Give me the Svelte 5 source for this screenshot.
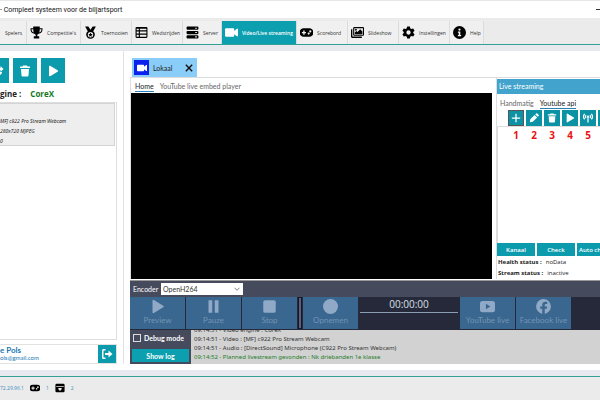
<script lang="ts">
  type Tab = { label: string; icon: string; size: string };

  const tabs: Tab[] = [
    { label: 'Spelers', icon: '', size: 'tiny' },
    { label: "Competitie's", icon: 'trophy', size: 'large' },
    { label: 'Toernooien', icon: 'medal', size: 'medium' },
    { label: 'Wedstrijden', icon: 'table', size: 'medium' },
    { label: 'Server', icon: 'server', size: 'small' },
    { label: 'Video/Live streaming', icon: 'video', size: 'wide' },
    { label: 'Scorebord', icon: 'gamepad', size: 'medium' },
    { label: 'Slideshow', icon: 'images', size: 'medium' },
    { label: 'Instellingen', icon: 'gear', size: 'medium' },
    { label: 'Help', icon: 'info', size: 'short' },
  ];

  const apiActions = [
    { icon: 'plus', label: 'Toevoegen' },
    { icon: 'pencil', label: 'Bewerken' },
    { icon: 'trash', label: 'Verwijderen' },
    { icon: 'play', label: 'Start' },
    { icon: 'antenna', label: 'Uitzenden' },
    { icon: '', label: 'Meer' },
  ];

  const logLines = [
    { text: '09:14:51 - Video engine : CoreX', ok: false },
    { text: '09:14:51 - Video : [MF] c922 Pro Stream Webcam', ok: false },
    { text: '09:14:51 - Audio : [DirectSound] Microphone (C922 Pro Stream Webcam)', ok: false },
    { text: '09:14:52 - Planned livestream gevonden : Nk driebanden 1e klasse', ok: true },
  ];

  let activeTab = $state('Video/Live streaming');
  let encoder = $state('OpenH264');
  let debug = $state(false);
</script>

{#snippet icon(name: string)}
  <svg class="icon" viewBox="0 0 24 24" fill="currentColor" aria-hidden="true">
    {#if name === 'trophy'}
      <path d="M6 1h12v3h5v3c0 4-3 7-7 7.500-.7.900-1.500 1.500-2.500 1.800V19H17v4H7v-4h3.500v-2.700c-1-.3-1.800-.9-2.500-1.800C4 14 1 11 1 7V4h5zM3 6v1c0 2.400 1.400 4.200 3.700 5C6.200 10 6 8 6 6zm18 0h-3c0 2-.2 4-.7 6C19.600 11.200 21 9.400 21 7z" />
    {:else if name === 'medal'}
      <path d="M2 1h6l4 6 4-6h6l-5 8.500a8 8 0 1 1-10 0zm10 10a5 5 0 1 0 0 10 5 5 0 0 0 0-10z" fill-rule="evenodd" />
      <path d="M12 12l1.300 2.700 2.700.4-2 2 .5 2.900-2.500-1.400L9.500 20l.5-2.900-2-2 2.700-.4z" />
    {:else if name === 'table'}
      <path d="M3 2h18a2 2 0 0 1 2 2v16a2 2 0 0 1-2 2H3a2 2 0 0 1-2-2V4a2 2 0 0 1 2-2zm0 3v3h4V5zm6 0v3h12V5zM3 10v4h4v-4zm6 0v4h12v-4zM3 16v4h4v-4zm6 0v4h12v-4z" fill-rule="evenodd" />
    {:else if name === 'server'}
      <path d="M3 1h18a2 2 0 0 1 2 2v2a2 2 0 0 1-2 2H3a2 2 0 0 1-2-2V3a2 2 0 0 1 2-2zm14 2v2h3V3zM3 9h18a2 2 0 0 1 2 2v2a2 2 0 0 1-2 2H3a2 2 0 0 1-2-2v-2a2 2 0 0 1 2-2zm14 2v2h3v-2zM3 17h18a2 2 0 0 1 2 2v2a2 2 0 0 1-2 2H3a2 2 0 0 1-2-2v-2a2 2 0 0 1 2-2zm14 2v2h3v-2z" fill-rule="evenodd" />
    {:else if name === 'video'}
      <path d="M2 4h13a2 2 0 0 1 2 2v3l5-4h2v14h-2l-5-4v3a2 2 0 0 1-2 2H2a2 2 0 0 1-2-2V6a2 2 0 0 1 2-2z" />
    {:else if name === 'gamepad'}
      <path d="M7 4h10a8 8 0 0 1 0 16H7A8 8 0 0 1 7 4zM6 8.500V11H3.500v2.500H6V16h2.500v-2.500H11V11H8.500V8.500zM16 12a2 2 0 1 0 0 4 2 2 0 0 0 0-4zm3-4a2 2 0 1 0 0 4 2 2 0 0 0 0-4z" fill-rule="evenodd" />
    {:else if name === 'images'}
      <path d="M6 2h16a2 2 0 0 1 2 2v12a2 2 0 0 1-2 2H6a2 2 0 0 1-2-2V4a2 2 0 0 1 2-2zm0 2v12h16V4z" fill-rule="evenodd" />
      <path d="M0 6h2.500v13.500H20V22H2a2 2 0 0 1-2-2zM7 15v-3l3-3 2 2 5-5 4 4v5z" />
      <circle cx="9" cy="7" r="1.700" />
    {:else if name === 'gear'}
      <path d="M9.500 1h5l.7 3.300 2.300 1.300 3.200-1.100 2.500 4.300-2.500 2.200v2l2.500 2.200-2.500 4.300-3.200-1.100-2.300 1.300-.7 3.300h-5l-.7-3.300-2.300-1.300-3.200 1.100L.8 15.200 3.300 13v-2L.8 8.800l2.500-4.300 3.200 1.100 2.300-1.300zM12 8a4 4 0 1 0 0 8 4 4 0 0 0 0-8z" fill-rule="evenodd" />
    {:else if name === 'info'}
      <path d="M12 0a12 12 0 1 1 0 24 12 12 0 0 1 0-24zm0 4.500a2 2 0 1 0 0 4.200 2 2 0 0 0 0-4.200zM9 10v2.500h1.500v4H9V19h6v-2.500h-1.500V10z" fill-rule="evenodd" />
    {:else if name === 'trash'}
      <path d="M8 1h8l1 2h5v3H2V3h5zM4 8h16l-1 13a2 2 0 0 1-2 2H7a2 2 0 0 1-2-2z" />
    {:else if name === 'play'}
      <path d="M4 3a1.500 1.500 0 0 1 2.200-1.300l15 9a1.500 1.500 0 0 1 0 2.600l-15 9A1.500 1.500 0 0 1 4 21z" />
    {:else if name === 'pause'}
      <path d="M4 2h6v20H4zM14 2h6v20h-6z" />
    {:else if name === 'stop'}
      <rect x="2" y="2" width="20" height="20" rx="3" />
    {:else if name === 'record'}
      <circle cx="12" cy="12" r="12" />
    {:else if name === 'plus'}
      <path d="M10.500 2h3v8.500H22v3h-8.500V22h-3v-8.500H2v-3h8.500z" />
    {:else if name === 'pencil'}
      <path d="M2 22l1-7L13.500 4.500l6 6L9 21zM15 3l2-2a2 2 0 0 1 2.800 0L23 4.200A2 2 0 0 1 23 7l-2 2z" />
    {:else if name === 'antenna'}
      <g fill="none" stroke="currentColor" stroke-width="3">
        <path d="M4 2C.5 6 .5 11 4 15M20 2c3.500 4 3.500 9 0 13M7.500 5c-2 2-2 5 0 7M16.500 5c2 2 2 5 0 7M12 9v14" />
      </g>
      <circle cx="12" cy="8.500" r="2.500" />
    {:else if name === 'youtube'}
      <path d="M4 3h16a4 4 0 0 1 4 4v10a4 4 0 0 1-4 4H4a4 4 0 0 1-4-4V7a4 4 0 0 1 4-4zm5.500 4.500v9l7-4.500z" fill-rule="evenodd" />
    {:else if name === 'facebook'}
      <path d="M12 0a12 12 0 0 1 2 23.800v-8.300h3.200l.6-3.500H14V9.800c0-1.200.6-2 2-2h2v-3c-1-.2-2-.3-3-.3-3 0-5 1.900-5 5V12H6.700v3.500H10v8.300A12 12 0 0 1 12 0z" />
    {:else if name === 'close'}
      <path d="M4 1l8 8 8-8 3 3-8 8 8 8-3 3-8-8-8 8-3-3 8-8-8-8z" />
    {:else if name === 'logout'}
      <path d="M9 2v3H5v14h4v3H5a3 3 0 0 1-3-3V5a3 3 0 0 1 3-3zM15 5l8 7-8 7v-5H8v-4h7z" />
    {:else if name === 'box'}
      <path d="M4 2h16a3 3 0 0 1 3 3v14a3 3 0 0 1-3 3H4a3 3 0 0 1-3-3V5a3 3 0 0 1 3-3zM3 7v2h18V7zm5 5v3l4 4 4-4v-3z" fill-rule="evenodd" />
    {:else if name === 'link'}
      <path d="M4 12a6 6 0 0 1 6-6h7V2l6 6-6 6v-4h-7a2 2 0 0 0-2 2zm16 2a6 6 0 0 1-6 6H2v-4h12a2 2 0 0 0 2-2z" />
    {:else if name === 'chevron'}
      <path d="M2 7l10 10L22 7" fill="none" stroke="currentColor" stroke-width="2.500" />
    {/if}
  </svg>
{/snippet}

<div class="app">
  <header class="titlebar">
    <span>- Compleet systeem voor de biljartsport</span>
    <button class="minimize" aria-label="Minimaliseren"></button>
  </header>

  <nav class="tabs">
    {#each tabs as tab}
      <button class="tab {tab.size}" class:active={activeTab === tab.label} onclick={() => (activeTab = tab.label)}>
        {#if tab.icon}{@render icon(tab.icon)}{/if}
        <span>{tab.label}</span>
      </button>
    {/each}
  </nav>

  <main class="content">
    <aside class="sources">
      <div class="source-actions">
        <button class="square cut" aria-label="Koppelen">{@render icon('link')}</button>
        <button class="square" aria-label="Verwijderen">{@render icon('trash')}</button>
        <button class="square" aria-label="Start">{@render icon('play')}</button>
      </div>
      <div class="engine"><span>gine :</span><span class="engine-name">CoreX</span></div>
      <div class="source-list">
        <div class="source">
          <span>MF] c922 Pro Stream Webcam</span>
          <span>280x720 MJPEG</span>
          <span>0</span>
        </div>
      </div>
      <div class="account">
        <div class="account-text">
          <strong>e Pols</strong>
          <a href="#mail">ols@gmail.com</a>
        </div>
        <button class="logout" aria-label="Uitloggen">{@render icon('logout')}</button>
      </div>
    </aside>

    <section class="workspace">
      <div class="file-tabs">
        <div class="file-tab">
          <span class="file-icon">{@render icon('video')}</span>
          <span class="file-name">Lokaal</span>
          <button class="close" aria-label="Sluiten">{@render icon('close')}</button>
        </div>
      </div>

      <div class="stage">
        <div class="player">
          <div class="sub-tabs player-tabs">
            <button class="sub-tab selected">Home</button>
            <button class="sub-tab">YouTube live embed player</button>
          </div>
          <div class="video"></div>
        </div>

        <aside class="live">
          <h2>Live streaming</h2>
          <div class="sub-tabs live-tabs">
            <button class="sub-tab">Handmatig</button>
            <button class="sub-tab selected">Youtube api</button>
          </div>
          <div class="api-actions">
            {#each apiActions as action, i}
              <div class="api-action">
                <button class:focused={i === 0} aria-label={action.label}>{@render icon(action.icon)}</button>
                {#if action.icon}<span>{i + 1}</span>{/if}
              </div>
            {/each}
          </div>
          <div class="streams"></div>
          <div class="stream-buttons">
            <button>Kanaal</button>
            <button>Check</button>
            <button class="last">Auto ch</button>
          </div>
          <dl>
            <div><dt>Health status :</dt><dd>noData</dd></div>
            <div><dt>Stream status :</dt><dd>inactive</dd></div>
          </dl>
        </aside>
      </div>

      <div class="encoder">
        <label for="encoder">Encoder</label>
        <div class="select">
          <select id="encoder" bind:value={encoder}>
            <option>OpenH264</option>
          </select>
          {@render icon('chevron')}
        </div>
      </div>

      <div class="controls">
        <button class="control" disabled>{@render icon('play')}<span>Preview</span></button>
        <button class="control" disabled>{@render icon('pause')}<span>Pauze</span></button>
        <button class="control" disabled>{@render icon('stop')}<span>Stop</span></button>
        <div class="divider"></div>
        <button class="control" disabled>{@render icon('record')}<span>Opnemen</span></button>
        <div class="timer"><time>00:00:00</time></div>
        <button class="control" disabled>{@render icon('youtube')}<span>YouTube live</span></button>
        <button class="control" disabled>{@render icon('facebook')}<span>Facebook live</span></button>
      </div>

      <div class="bottom">
        <div class="debug">
          <label><input type="checkbox" bind:checked={debug} />Debug mode</label>
          <button>Show log</button>
        </div>
        <div class="log">
          {#each logLines as line}
            <div class:ok={line.ok}>{line.text}</div>
          {/each}
        </div>
      </div>
    </section>
  </main>

  <footer class="statusbar">
    <span>72.29.96.1</span>
    {@render icon('gamepad')}
    <span>1</span>
    {@render icon('box')}
    <span>2</span>
  </footer>
</div>

<style>
  :global(body) {
    margin: 0;
    overflow: hidden;
  }

  .app {
    display: flex;
    flex-direction: column;
    min-height: 100vh;
    overflow: hidden;
    background: white;
    color: #222;
    font-family: Lato, 'Open Sans', sans-serif;
    font-size: 7px;
    line-height: 10px;
    white-space: nowrap;
  }

  .app * {
    box-sizing: border-box;
  }

  button,
  select,
  input {
    margin: 0;
    padding: 0;
    border: 0;
    border-radius: 0;
    background: none;
    color: inherit;
    font: inherit;
  }

  .icon {
    display: block;
    flex: none;
    width: 12px;
    height: 12px;
  }

  .titlebar {
    display: flex;
    align-items: center;
    justify-content: space-between;
    height: 18px;
    border-top: 1px solid #e6e6e6;
    font-family: Roboto, sans-serif;
    color: #111;
  }

  .minimize {
    width: 4px;
    height: 1px;
    background: #333;
  }

  .tabs {
    display: flex;
    height: 27px;
    padding-top: 3px;
    background: #ebebeb;
    border-bottom: 1px solid #35a096;
  }

  .tab {
    display: flex;
    align-items: center;
    gap: 4px;
    padding-left: 3px;
    border-right: 1px solid #dcdcdc;
    background: #f0f0f0;
    font-family: 'Open Sans', sans-serif;
    font-size: 5px;
    color: #333;
  }

  .tab .icon {
    width: 13px;
    height: 13px;
    color: black;
  }

  .tab.tiny { width: 27px; padding-left: 5px; }
  .tab.short { width: 34px; }
  .tab.small { width: 39px; }
  .tab.medium { width: 51px; }
  .tab.large { width: 54px; }
  .tab.wide { width: 75px; }

  .tab.active {
    background: #0b9fb0;
    color: white;
    font-weight: 600;
  }

  .tab.active .icon {
    color: white;
  }

  .content {
    display: flex;
    flex: 1;
    padding-bottom: 6px;
    border-top: 6px solid #e7e9ee;
  }

  .sources {
    display: flex;
    flex-direction: column;
    flex: none;
    width: 124px;
    padding: 7px 6px 0 0;
    border-right: 1px solid #e2e2e2;
  }

  .source-actions {
    display: flex;
    gap: 4px;
  }

  .square {
    display: flex;
    align-items: center;
    justify-content: center;
    width: 24px;
    height: 25px;
    background: #0b9bad;
    color: white;
  }

  .square.cut {
    justify-content: flex-end;
    width: 9px;
    padding-right: 5px;
    overflow: hidden;
  }

  .engine {
    display: flex;
    gap: 9px;
    padding: 6px 0 3px;
    font-family: 'Open Sans', sans-serif;
    font-size: 8px;
    font-weight: 700;
  }

  .engine-name {
    color: #11761b;
  }

  .source-list {
    flex: 1;
    border: 1px solid #dedede;
    border-left: 0;
    margin-bottom: 4px;
  }

  .source {
    display: flex;
    flex-direction: column;
    height: 43px;
    margin-right: 1px;
    padding-top: 12px;
    border: 1px solid #d4d4d4;
    border-left: 0;
    background: #eee;
    font-family: 'Noto Sans', sans-serif;
    font-size: 5px;
    font-style: italic;
  }

  .account {
    display: flex;
    align-items: center;
    justify-content: space-between;
    height: 20px;
    border: 1px solid #e2e2e2;
    border-left: 0;
  }

  .account-text {
    display: flex;
    flex-direction: column;
    font-size: 6px;
    line-height: 8px;
    color: #1a78b4;
  }

  .account-text strong {
    font-size: 8px;
  }

  a {
    color: inherit;
    text-decoration: none;
  }

  .logout {
    display: flex;
    align-items: center;
    justify-content: center;
    width: 18px;
    height: 18px;
    background: #0b9bad;
    color: white;
  }

  .workspace {
    display: flex;
    flex-direction: column;
    flex: 1;
    min-width: 0;
    padding: 7px 0 0 6px;
  }

  .file-tabs {
    display: flex;
    height: 20px;
    padding-left: 2px;
    border-bottom: 1px solid #ddd;
  }

  .file-tab {
    display: flex;
    align-items: center;
    width: 65px;
    padding: 0 4px 0 2px;
    background: #8bcdf9;
    font-size: 7px;
  }

  .file-icon {
    display: flex;
    align-items: center;
    justify-content: center;
    width: 15px;
    height: 15px;
    background: #0b22ee;
    color: white;
  }

  .file-icon .icon {
    width: 10px;
    height: 10px;
  }

  .file-name {
    flex: 1;
    padding-left: 4px;
  }

  .close .icon {
    width: 8px;
    height: 8px;
    color: #111;
  }

  .stage {
    display: flex;
    flex: 1;
    gap: 4px;
    padding-bottom: 1px;
  }

  .player {
    display: flex;
    flex-direction: column;
    flex: 1;
    min-width: 0;
    border-left: 1px solid #ddd;
  }

  .sub-tabs {
    display: flex;
    gap: 6px;
    color: #666;
    font-size: 7px;
  }

  .sub-tab {
    border-bottom: 1px solid transparent;
  }

  .sub-tab.selected {
    border-color: #2980b9;
    color: #222;
  }

  .player-tabs {
    height: 15px;
    padding: 3px 4px 1px;
  }

  .video {
    flex: 1;
    background: black;
  }

  .live {
    display: flex;
    flex-direction: column;
    flex: none;
    width: 104px;
    padding-top: 1px;
    border-left: 1px solid #ddd;
    overflow: hidden;
  }

  h2 {
    margin: 0;
    padding: 2px;
    height: 15px;
    background: #42a4cc;
    color: white;
    font-size: 7px;
    font-weight: 400;
    line-height: 11px;
  }

  .live-tabs {
    height: 16px;
    padding: 3px 3px 1px;
  }

  .api-actions {
    display: flex;
    gap: 2px;
    height: 17px;
    padding-left: 11px;
    border-bottom: 1px solid #ddd;
  }

  .api-action {
    display: flex;
    flex-direction: column;
    align-items: center;
    flex: none;
    width: 16px;
  }

  .api-action button {
    display: flex;
    align-items: center;
    justify-content: center;
    flex: none;
    width: 16px;
    height: 16px;
    background: #0b93a5;
    color: white;
  }

  .api-action .focused {
    outline: 1px solid #555;
    outline-offset: -1px;
  }

  .api-action .icon {
    width: 10px;
    height: 10px;
  }

  .api-action span {
    padding-top: 4px;
    color: #ec1111;
    font-family: 'Open Sans', sans-serif;
    font-size: 10px;
    font-weight: 700;
  }

  .streams {
    flex: 1;
    border-left: 1px solid #ddd;
  }

  .stream-buttons {
    display: flex;
    gap: 2px;
    font-family: 'Open Sans', sans-serif;
  }

  .stream-buttons button {
    flex: none;
    width: 38px;
    height: 13px;
    background: #0b9bad;
    color: white;
    font-size: 6px;
    font-weight: 600;
  }

  .stream-buttons .last {
    width: 37px;
    padding-left: 2px;
    text-align: left;
  }

  dl {
    margin: 0;
    padding: 1px 1px 0;
    font-family: 'Open Sans', sans-serif;
    font-size: 6px;
    line-height: 11px;
  }

  dl div {
    display: flex;
    gap: 4px;
  }

  dt {
    font-weight: 700;
  }

  dd {
    margin: 0;
  }

  .encoder {
    display: flex;
    align-items: center;
    gap: 4px;
    height: 17px;
    padding: 0 3px;
    border-top: 1px solid #999;
    background: #464a5d;
    color: white;
    font-size: 7px;
  }

  .encoder label {
    width: 24px;
  }

  .select {
    display: flex;
    align-items: center;
    width: 82px;
    height: 12px;
    padding-right: 3px;
    background: white;
    color: #333;
  }

  .select .icon {
    width: 6px;
    height: 6px;
  }

  select {
    flex: 1;
    appearance: none;
    padding-left: 2px;
    outline: 0;
  }

  .controls {
    display: flex;
    gap: 1px;
    height: 33px;
    padding-bottom: 1px;
    background: #25293a;
  }

  .control {
    display: flex;
    flex-direction: column;
    align-items: center;
    justify-content: space-between;
    flex: none;
    width: 55px;
    padding: 2px 0 3px;
    background: #3a678f;
    color: #7393b4;
    font-size: 8px;
    line-height: 11px;
  }

  .control .icon {
    width: 15px;
    height: 15px;
    color: #8fa9c6;
  }

  .divider {
    width: 4px;
    border: 1px solid #17192a;
    background: #596077;
  }

  .timer {
    flex: none;
    width: 100px;
    padding: 0 1px;
    text-align: center;
    color: #dde0e8;
    font-family: 'Open Sans', sans-serif;
    font-size: 10px;
    line-height: 15px;
  }

  .timer time {
    display: block;
    border-bottom: 1px solid #8b9db5;
  }

  .bottom {
    display: flex;
    height: 34px;
  }

  .debug {
    display: flex;
    flex-direction: column;
    justify-content: space-between;
    flex: none;
    width: 61px;
    padding: 3px 2px 2px;
    background: #464a5d;
    color: white;
    font-size: 7px;
    font-weight: 700;
  }

  .debug label {
    display: flex;
    align-items: center;
    gap: 3px;
    padding-left: 1px;
  }

  .debug input {
    appearance: none;
    width: 8px;
    height: 8px;
    border: 1px solid #ddd;
  }

  .debug button {
    height: 13px;
    background: #0b9fb0;
  }

  .log {
    display: flex;
    flex-direction: column;
    justify-content: flex-end;
    flex: 1;
    min-width: 0;
    padding: 0 3px 2px;
    overflow: hidden;
    background: #d2d2d2;
    color: #333;
    font-family: 'Noto Sans', sans-serif;
    font-size: 6px;
    line-height: 9px;
  }

  .log .ok {
    color: #1f7d2a;
  }

  .statusbar {
    display: flex;
    align-items: flex-start;
    gap: 6px;
    height: 30px;
    padding-top: 7px;
    border-top: 6px solid #e7e9ee;
    background: #ebebeb;
    box-shadow: inset 0 1px #35a096;
    color: #3a8cc0;
    font-family: 'Open Sans', sans-serif;
    font-size: 5px;
  }

  .statusbar .icon {
    width: 10px;
    height: 10px;
    color: black;
  }
</style>
